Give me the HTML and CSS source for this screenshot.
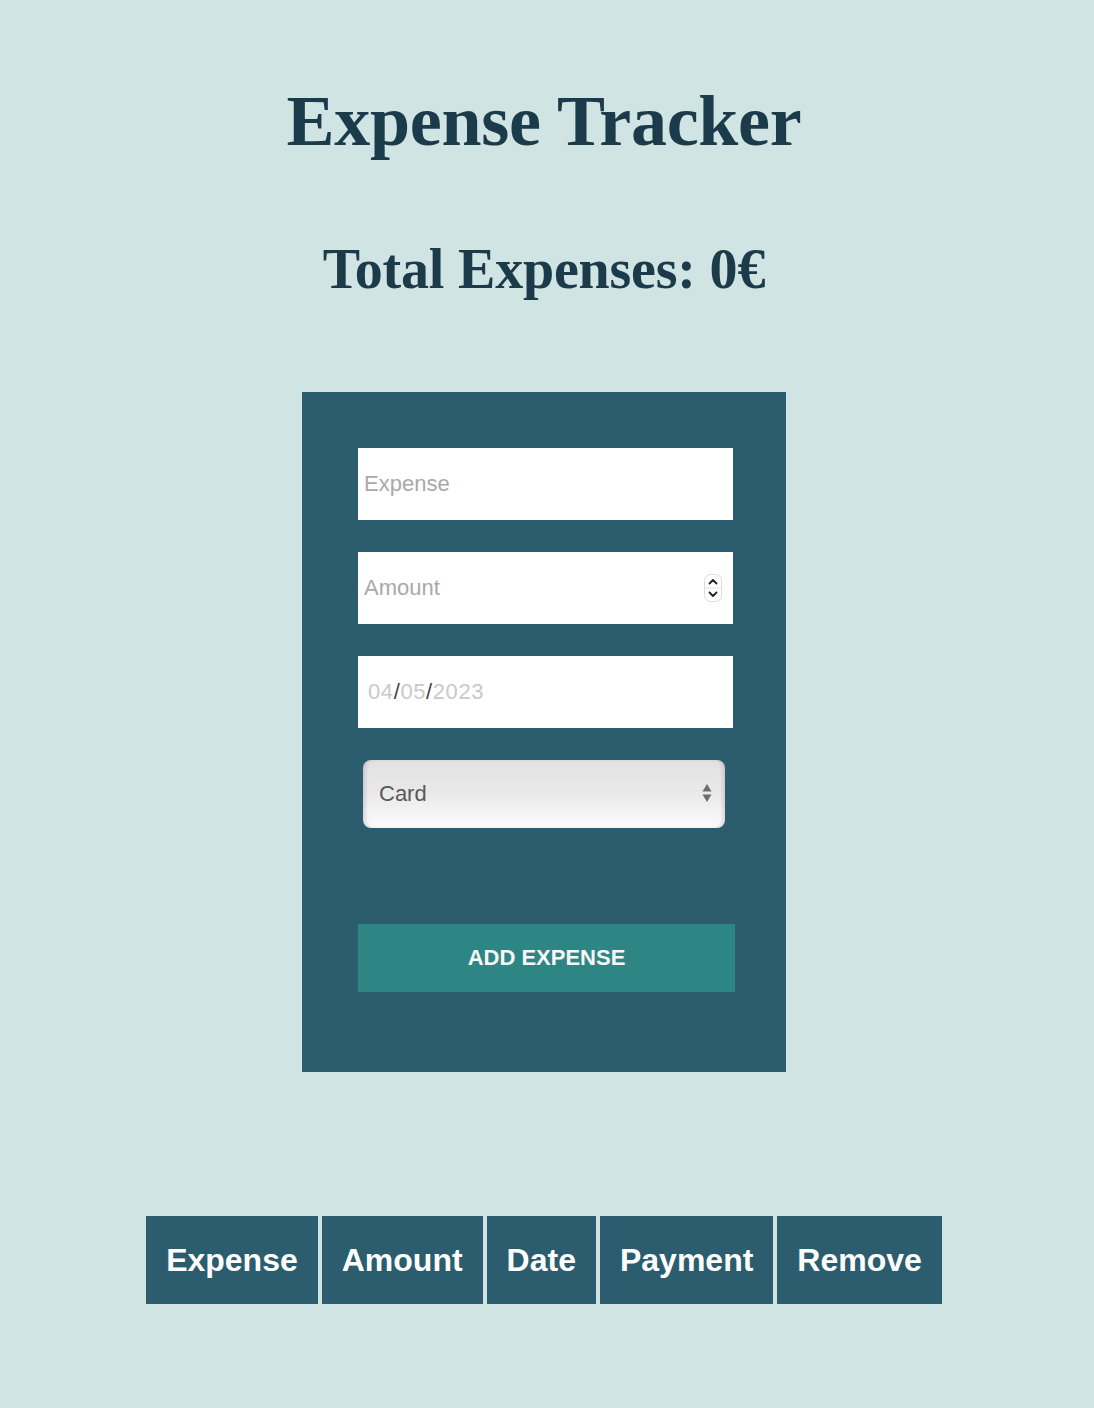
FILE: index.html
```html
<!DOCTYPE html>
<html lang="en">
<head>
<meta charset="utf-8">
<title>Expense Tracker</title>
<link rel="stylesheet" href="styles.css">
</head>
<body>
<main class="page">
  <h1 class="title">Expense Tracker</h1>
  <h2 class="total">Total Expenses: 0€</h2>

  <form class="panel">
    <div class="field"><input class="text-input" type="text" placeholder="Expense"></div>
    <div class="field spin-field">
      <input class="text-input" type="text" placeholder="Amount">
      <span class="spinner">
        <svg width="18" height="28" viewBox="0 0 18 28">
          <rect x="0.5" y="0.5" width="17" height="27" rx="6" fill="#fff" stroke="#dcdcdc"/>
          <line x1="1" y1="14" x2="17" y2="14" stroke="#e2e2e2"/>
          <path d="M5.5 9.5 L9 6 L12.5 9.5" fill="none" stroke="#222" stroke-width="1.8" stroke-linecap="round" stroke-linejoin="round"/>
          <path d="M5.5 18.5 L9 22 L12.5 18.5" fill="none" stroke="#222" stroke-width="1.8" stroke-linecap="round" stroke-linejoin="round"/>
        </svg>
      </span>
    </div>
    <div class="field date-field"><span class="d-part">04</span><span class="d-sep">/</span><span class="d-part">05</span><span class="d-sep">/</span><span class="d-part">2023</span></div>
    <div class="select-box">
      <span class="select-text">Card</span>
      <svg class="select-arrows" width="10" height="20" viewBox="0 0 10 20">
        <path d="M5 1 L9.5 8.5 L0.5 8.5 Z" fill="#6e6b6b"/>
        <path d="M5 19 L9.5 11.5 L0.5 11.5 Z" fill="#6e6b6b"/>
      </svg>
    </div>
    <button class="add-btn" type="button">ADD EXPENSE</button>
  </form>

  <table class="list">
    <thead>
      <tr>
        <th>Expense</th>
        <th>Amount</th>
        <th>Date</th>
        <th>Payment</th>
        <th>Remove</th>
      </tr>
    </thead>
  </table>
</main>
</body>
</html>
```

FILE: styles.css
```css
html {
  background: #d1e4e4;
}
body {
  margin: 0;
  width: 1088px;
  min-height: 1408px;
  background: #d1e4e4;
  font-family: "Liberation Sans", Arial, sans-serif;
}
.page {
  display: flex;
  flex-direction: column;
  align-items: center;
}
.title {
  margin: 81px 0 0;
  font-family: "Liberation Serif", "Times New Roman", serif;
  font-weight: 700;
  font-size: 72px;
  line-height: 80px;
  letter-spacing: -0.3px;
  color: #1b3a4a;
}
.total {
  margin: 76px 0 0;
  font-family: "Liberation Serif", "Times New Roman", serif;
  font-weight: 700;
  font-size: 56px;
  line-height: 64px;
  letter-spacing: -0.2px;
  color: #1b3a4a;
}
.panel {
  margin-top: 91px;
  width: 484px;
  box-sizing: border-box;
  padding: 56px 51px 80px 56px;
  background: #2c5d6e;
  display: flex;
  flex-direction: column;
}
.field {
  position: relative;
  width: 375px;
  height: 72px;
  background: #fff;
  margin-bottom: 32px;
}
.text-input {
  display: block;
  width: 100%;
  height: 100%;
  box-sizing: border-box;
  border: 0;
  outline: 0;
  padding: 0 0 0 6px;
  font-family: "Liberation Sans", Arial, sans-serif;
  font-size: 22px;
  color: #333;
  background: #fff;
}
.text-input::placeholder {
  color: #a9a9a9;
}
.spinner {
  position: absolute;
  right: 11px;
  top: 22px;
  width: 18px;
  height: 28px;
}
.spinner svg {
  display: block;
}
.date-field {
  display: flex;
  align-items: center;
  padding-left: 10px;
  box-sizing: border-box;
  font-size: 22px;
  letter-spacing: 0.6px;
}
.d-part {
  color: #c9c9c9;
}
.d-sep {
  color: #444;
}
.select-box {
  position: relative;
  margin-left: 5px;
  width: 362px;
  height: 68px;
  box-sizing: border-box;
  border-radius: 8px;
  background: linear-gradient(#e2e2e2 0%, #e8e8e8 45%, #fbfbfb 100%);
  box-shadow: inset 4px 0 4px -2px rgba(0,0,0,0.15), inset -4px 0 4px -2px rgba(0,0,0,0.15);
  display: flex;
  align-items: center;
  padding-left: 16px;
}
.select-text {
  font-size: 22px;
  color: #5a5757;
}
.select-arrows {
  position: absolute;
  right: 13px;
  top: 23px;
}
.add-btn {
  margin-top: 96px;
  width: 377px;
  height: 68px;
  border: 0;
  padding: 0;
  background: #2e8684;
  color: #f7f7f7;
  font-family: "Liberation Sans", Arial, sans-serif;
  font-weight: 700;
  font-size: 22px;
}
.list {
  margin-top: 140px;
  border-spacing: 4px;
}
.list th {
  background: #2c5d6e;
  color: #fff;
  font-family: "Liberation Sans", Arial, sans-serif;
  font-weight: 700;
  font-size: 32px;
  line-height: 38px;
  padding: 25px 20px;
}
```
